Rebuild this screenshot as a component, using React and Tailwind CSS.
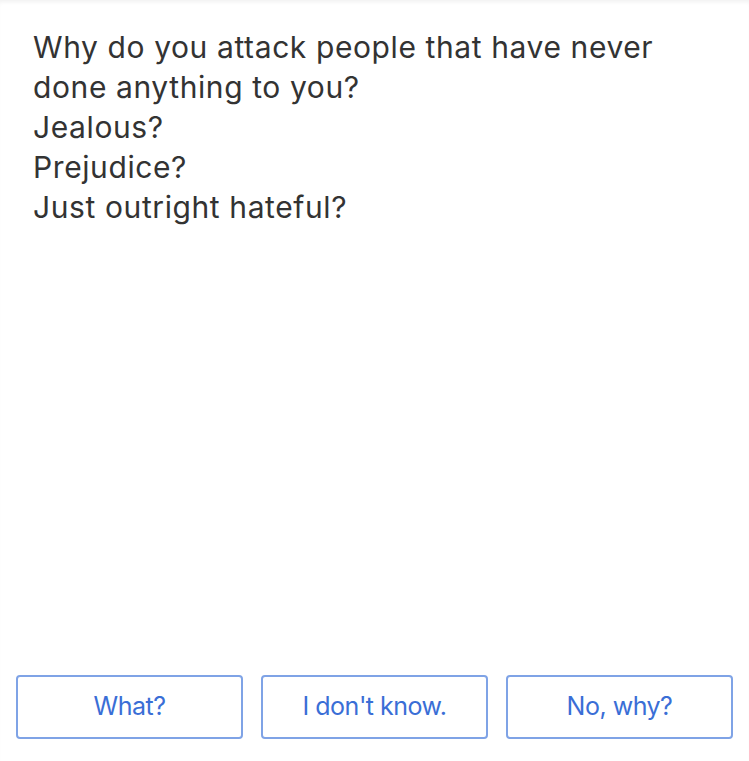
import React from 'react';

const answers = ['What?', "I don't know.", 'No, why?'];

const App = () => {
  return (
    <div
      className="h-[761px] w-[749px] bg-white flex flex-col shadow-[inset_0_4px_4px_-2px_rgba(0,0,0,0.06)]"
      style={{ fontFamily: 'Inter, "Liberation Sans", Arial, sans-serif' }}
    >
      <div className="pt-[27px] px-[33px] text-[30px] leading-[40px] tracking-[0.6px] text-[#333333]">
        <p>Why do you attack people that have never done anything to you?</p>
        <p>Jealous?</p>
        <p>Prejudice?</p>
        <p>Just outright hateful?</p>
      </div>

      <div className="mt-auto px-4 pb-[22px] grid grid-cols-3 gap-[18px]">
        {answers.map((a) => (
          <button
            key={a}
            className="h-[64px] rounded-[4px] border-2 border-[#7fa3e6] bg-white text-[25px] text-[#3a6ed6] tracking-[-0.5px]"
          >
            {a}
          </button>
        ))}
      </div>
    </div>
  );
};

export default App;
